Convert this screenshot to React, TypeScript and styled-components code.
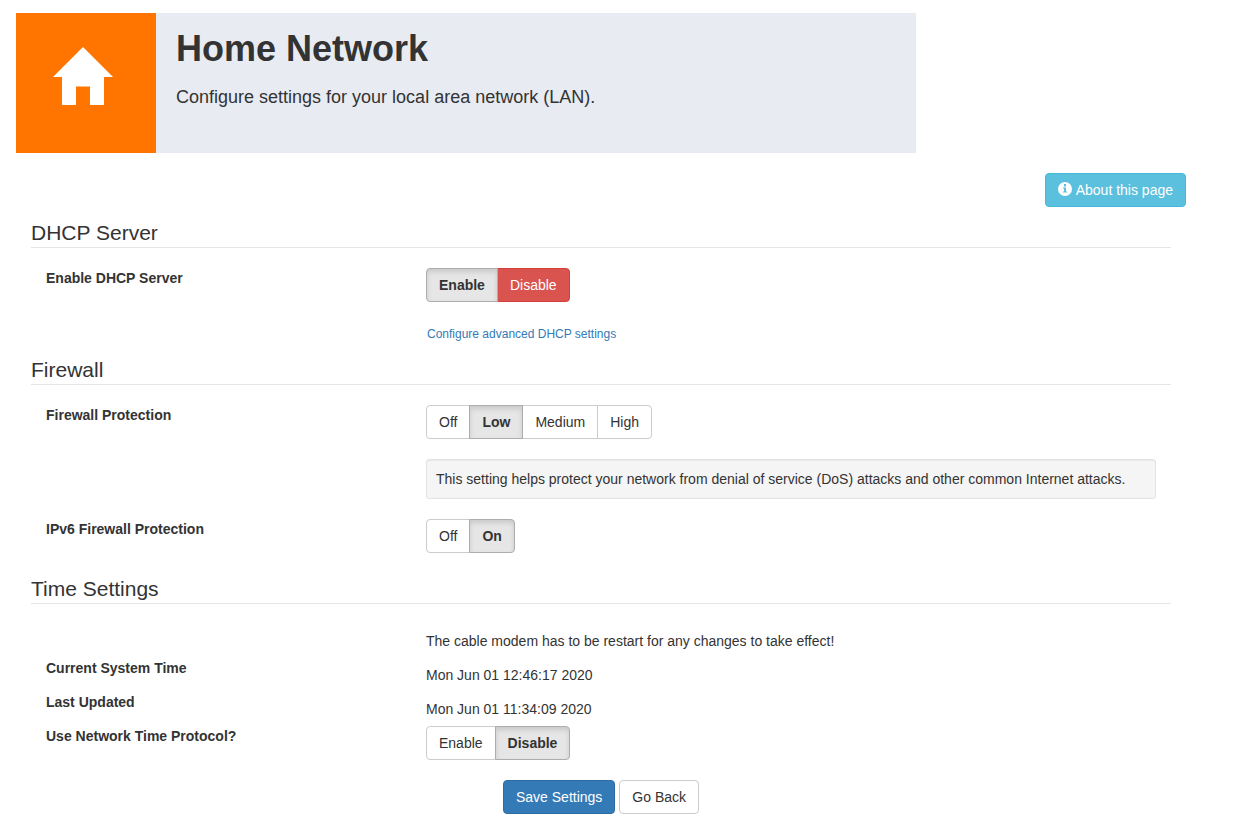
import { useState } from "react";
import styled, { createGlobalStyle, css } from "styled-components";

const GlobalStyle = createGlobalStyle`
  *, *::before, *::after { box-sizing: border-box; }
  body {
    margin: 0;
    background: #fff;
    color: #333;
    font-family: Arial, "Liberation Sans", sans-serif;
    font-size: 14px;
    line-height: 20px;
  }
`;

const Page = styled.main`
  padding: 13px 16px;
`;

const Container = styled.div`
  max-width: 1170px;
`;

const Banner = styled.header`
  display: flex;
  max-width: 900px;
  min-height: 140px;
  background: #e8ebf2;
`;

const BannerIcon = styled.div`
  flex: none;
  width: 140px;
  padding: 34px 36px;
  background: #ff7500;
  color: #fff;

  svg {
    display: block;
    width: 62px;
    height: 60px;
  }
`;

const BannerText = styled.div`
  padding: 16px 20px;
`;

const Title = styled.h1`
  margin: 0 0 15px;
  font-size: 36px;
  line-height: 40px;
  font-weight: 700;
`;

const Lead = styled.p`
  margin: 0;
  font-size: 18px;
  line-height: 26px;
`;

const Toolbar = styled.div`
  display: flex;
  justify-content: flex-end;
  padding: 20px 0 10px;
`;

const tones = {
  default: { background: "#fff", border: "#ccc", color: "#333" },
  primary: { background: "#337ab7", border: "#2e6da4", color: "#fff" },
  info: { background: "#5bc0de", border: "#46b8da", color: "#fff" },
  danger: { background: "#d9534f", border: "#d43f3a", color: "#fff" },
};

type Tone = keyof typeof tones;

const buttonShape = css<{ $tone?: Tone }>`
  padding: 6px 12px;
  border: 1px solid ${({ $tone = "default" }) => tones[$tone].border};
  border-radius: 4px;
  background: ${({ $tone = "default" }) => tones[$tone].background};
  color: ${({ $tone = "default" }) => tones[$tone].color};
  font-family: inherit;
  font-size: 14px;
  line-height: 20px;
  white-space: nowrap;
  cursor: pointer;
`;

const Button = styled.button<{ $tone?: Tone }>`
  ${buttonShape}
  display: inline-flex;
  gap: 4px;

  svg {
    width: 14px;
    height: 14px;
    margin-top: 2px;
  }
`;

const Form = styled.form`
  padding: 0 15px;
`;

const Section = styled.section`
  display: flex;
  flex-direction: column;
`;

const SectionTitle = styled.h2`
  margin: 0 0 20px;
  padding-top: 2px;
  border-bottom: 1px solid #e5e5e5;
  font-size: 21px;
  line-height: 28px;
  font-weight: 400;
`;

const Row = styled.div<{ $gap?: boolean }>`
  display: grid;
  grid-template-columns: minmax(0, 1fr) minmax(0, 2fr);
  margin-bottom: ${({ $gap }) => ($gap ? "20px" : "0")};
`;

const RowLabel = styled.div`
  padding: 0 15px;
  font-weight: 700;
`;

const RowBody = styled.div`
  grid-column: 2;
  padding: 0 15px;
`;

const StaticText = styled.p`
  margin: 0;
  padding: 7px 0;
`;

const LinkRow = styled(RowBody)`
  padding: 0 16px;
  margin-bottom: 9px;
  line-height: 22px;
`;

const TextLink = styled.a`
  color: #337ab7;
  font-size: 12px;
  text-decoration: none;

  &:hover {
    text-decoration: underline;
  }
`;

const Well = styled.div`
  padding: 9px;
  border: 1px solid #e3e3e3;
  border-radius: 3px;
  background: #f5f5f5;
  box-shadow: inset 0 1px 1px rgba(0, 0, 0, 0.05);
`;

const Segments = styled.div`
  display: flex;
`;

const Segment = styled.label<{ $tone?: Tone }>`
  ${buttonShape}
  position: relative;
  border-radius: 0;

  &:not(:first-child) {
    margin-left: -1px;
  }
  &:first-child {
    border-radius: 4px 0 0 4px;
  }
  &:last-child {
    border-radius: 0 4px 4px 0;
  }
  &:has(input:checked) {
    z-index: 1;
    border-color: #adadad;
    background: #e6e6e6;
    color: #333;
    font-weight: 700;
    box-shadow: inset 0 3px 5px rgba(0, 0, 0, 0.125);
  }

  input {
    position: absolute;
    inset: 0;
    width: 100%;
    height: 100%;
    margin: 0;
    opacity: 0;
    cursor: pointer;
  }
`;

const Actions = styled.div`
  display: flex;
  justify-content: center;
  gap: 4px;
`;

function HomeIcon() {
  return (
    <svg viewBox="0 0 62 60" aria-hidden="true">
      <path
        fill="currentColor"
        d="M31 0 L61 30 H52 V58 H38 V39.400 H24 V58 H10 V30 H1 Z"
      />
    </svg>
  );
}

function InfoIcon() {
  return (
    <svg viewBox="0 0 14 14" aria-hidden="true">
      <path
        fill="currentColor"
        fillRule="evenodd"
        d="M7 0a7 7 0 1 0 0 14a7 7 0 1 0 0-14zM6 2h2v2.500H6zM5 5.500h3v4h1v1H5v-1h1v-3H5z"
      />
    </svg>
  );
}

interface ChoiceProps {
  name: string;
  label: string;
  options: string[];
  initial: string;
  dangerOption?: string;
}

function Choice({ name, label, options, initial, dangerOption }: ChoiceProps) {
  const [value, setValue] = useState(initial);
  return (
    <Row $gap>
      <RowLabel id={`${name}-label`}>{label}</RowLabel>
      <RowBody>
        <Segments role="radiogroup" aria-labelledby={`${name}-label`}>
          {options.map((option) => (
            <Segment key={option} $tone={option === dangerOption ? "danger" : "default"}>
              <input
                type="radio"
                name={name}
                value={option}
                checked={value === option}
                onChange={() => setValue(option)}
              />
              {option}
            </Segment>
          ))}
        </Segments>
      </RowBody>
    </Row>
  );
}

export default function App() {
  return (
    <Page>
      <GlobalStyle />
      <Container>
        <Banner>
          <BannerIcon>
            <HomeIcon />
          </BannerIcon>
          <BannerText>
            <Title>Home Network</Title>
            <Lead>Configure settings for your local area network (LAN).</Lead>
          </BannerText>
        </Banner>
        <Toolbar>
          <Button type="button" $tone="info">
            <InfoIcon />
            About this page
          </Button>
        </Toolbar>
        <Form onSubmit={(event) => event.preventDefault()}>
          <Section>
            <SectionTitle>DHCP Server</SectionTitle>
            <Choice
              name="dhcp"
              label="Enable DHCP Server"
              options={["Enable", "Disable"]}
              initial="Enable"
              dangerOption="Disable"
            />
            <Row>
              <LinkRow>
                <TextLink href="#dhcp">Configure advanced DHCP settings</TextLink>
              </LinkRow>
            </Row>
          </Section>
          <Section>
            <SectionTitle>Firewall</SectionTitle>
            <Choice
              name="firewall"
              label="Firewall Protection"
              options={["Off", "Low", "Medium", "High"]}
              initial="Low"
            />
            <Row $gap>
              <RowBody>
                <Well>
                  This setting helps protect your network from denial of service (DoS) attacks and
                  other common Internet attacks.
                </Well>
              </RowBody>
            </Row>
            <Choice
              name="firewall6"
              label="IPv6 Firewall Protection"
              options={["Off", "On"]}
              initial="On"
            />
          </Section>
          <Section>
            <SectionTitle>Time Settings</SectionTitle>
            <Row>
              <RowBody>
                <StaticText>
                  The cable modem has to be restart for any changes to take effect!
                </StaticText>
              </RowBody>
            </Row>
            <Row>
              <RowLabel>Current System Time</RowLabel>
              <RowBody>
                <StaticText>Mon Jun 01 12:46:17 2020</StaticText>
              </RowBody>
            </Row>
            <Row>
              <RowLabel>Last Updated</RowLabel>
              <RowBody>
                <StaticText>Mon Jun 01 11:34:09 2020</StaticText>
              </RowBody>
            </Row>
            <Choice
              name="ntp"
              label="Use Network Time Protocol?"
              options={["Enable", "Disable"]}
              initial="Disable"
            />
          </Section>
          <Actions>
            <Button type="submit" $tone="primary">
              Save Settings
            </Button>
            <Button type="button">Go Back</Button>
          </Actions>
        </Form>
      </Container>
    </Page>
  );
}
